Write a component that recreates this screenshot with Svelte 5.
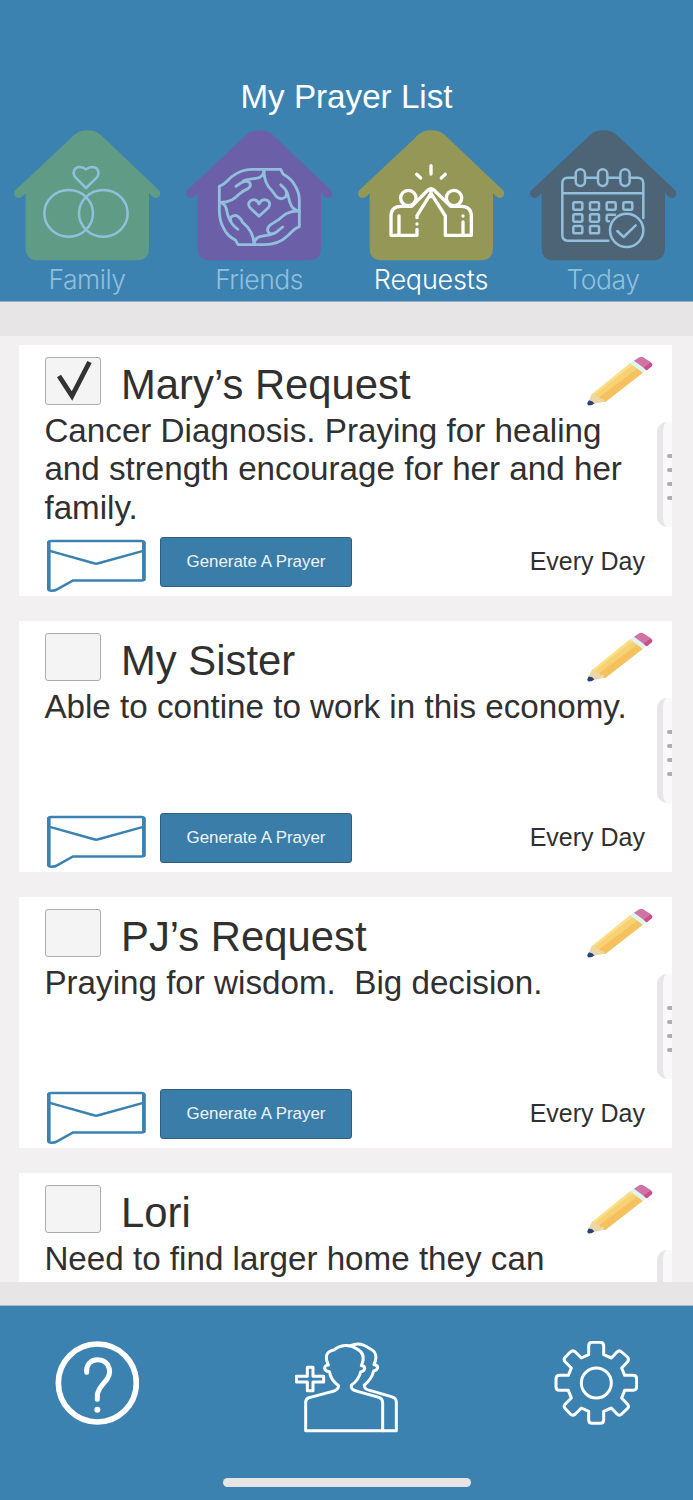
<script>
    let tabs = [
        { id: "family", label: "Family" },
        { id: "friends", label: "Friends" },
        { id: "requests", label: "Requests" },
        { id: "today", label: "Today" },
    ];
    let activeTab = "requests";

    let requests = [
        { name: "Mary’s Request", text: "Cancer Diagnosis. Praying for healing and strength encourage for her and her family.", when: "Every Day", done: true },
        { name: "My Sister", text: "Able to contine to work in this economy.", when: "Every Day", done: false },
        { name: "PJ’s Request", text: "Praying for wisdom.  Big decision.", when: "Every Day", done: false },
        { name: "Lori", text: "Need to find larger home they can", when: "", done: false },
    ];

    function toggle(index) {
        requests[index].done = !requests[index].done;
    }
</script>

<div class="app">
    <header>
        <h1>My Prayer List</h1>
        <nav>
            {#each tabs as tab}
                <button class="tab {tab.id}" class:active={tab.id === activeTab} on:click={() => (activeTab = tab.id)}>
                    <svg class="house" viewBox="3 30 516 393">
                        <path class="roof" d="M46 211 L213 54 C228 38 240 31 262 31 C284 31 296 38 312 54 L477 211 Q485 221 477 230 Q467 238 456 229 L447 220 V384 Q447 421 410 421 H114 Q77 421 77 384 V220 L68 229 Q57 239 46 230 Q38 221 46 211 Z" />
                        {#if tab.id === "family"}
                            <g class="lines">
                                <ellipse cx="206" cy="280" rx="73" ry="70" />
                                <ellipse cx="310" cy="280" rx="73" ry="70" />
                                <path d="M258 204 L227 173 C213 155 226 141 239 141 Q250 141 258 148 Q266 141 277 141 C290 141 303 155 290 173 Z" />
                            </g>
                        {:else if tab.id === "friends"}
                            <g class="lines thick" transform="translate(9 0)">
                                <path d="M133 247 V199 C152 193 155 183 169 171 Q198 148 231 148 H317 L324 162 C344 174 352 181 362 200 Q373 219 373 240 V320 C354 327 350 337 337 348 Q311 374 267 374 H189 L182 361 C165 351 155 344 145 323 Q133 302 133 270 Z" />
                                <path d="M133 247 C166 247 179 236 193 222 Q207 211 219 206 Q231 197 223 187 Q216 180 199 188 L183 199 M205 183 C225 171 264 185 267 151" />
                                <path d="M267 151 C267 178 274 197 290 211 Q299 222 304 230 Q318 242 331 231 Q339 221 330 207 L317 194 M334 213 C345 229 338 267 372 273" />
                                <path d="M372 273 C340 272 326 285 311 299 L287 314 Q273 325 280 337 Q291 347 306 335 L323 321 M301 338 C277 354 241 338 237 372" />
                                <path d="M133 247 C158 251 153 274 160 290 Q168 314 189 328 M168 303 Q161 288 182 286 Q195 290 203 307 Q236 334 237 372" />
                                <path d="M252 289 L225 263 C214 249 228 239 236 239 Q248 240 252 252 Q257 240 268 239 C279 239 290 249 280 263 Z" />
                            </g>
                        {:else if tab.id === "requests"}
                            <g class="lines bold" transform="translate(3 0)">
                                <path d="M258 137 V162 M215 163 L227 174 M301 163 L289 174" />
                                <ellipse cx="190" cy="234" rx="23" ry="23" />
                                <ellipse cx="327" cy="234" rx="23" ry="23" />
                                <path d="M216 328 V346 H138 V289 Q138 259 168 259 H200 L249 210 Q258 202 267 210 L317 259 H349 Q379 259 379 289 V346 H301 V288 L258 220 L216 287 V293 M216 312 v.1 M258 214 V230 M162 288 V342 M354 306 V342 M354 288 v.1" />
                            </g>
                        {:else}
                            <g class="lines" transform="translate(12 0)">
                                <path d="M265 362 H143 Q127 362 127 346 V189 Q127 173 143 173 H167 M196 173 H233 M264 173 H300 M329 173 H353 Q370 173 370 190 V294 M127 220 H370" />
                                <rect x="167" y="148" width="28" height="50" rx="14" />
                                <rect x="234" y="148" width="28" height="50" rx="14" />
                                <rect x="301" y="148" width="28" height="50" rx="14" />
                                {#each [[160, 247], [210, 247], [260, 247], [310, 247], [160, 283], [210, 283], [160, 318], [210, 318]] as [x, y]}
                                    <rect {x} {y} width="27" height="22" rx="4" />
                                {/each}
                                <path d="M285 284 H263 Q260 284 260 288 V299 Q260 304 267 304" />
                                <circle cx="320" cy="331" r="50" />
                                <path d="M292 333 L311 351 L347 316" />
                            </g>
                        {/if}
                    </svg>
                    <span>{tab.label}</span>
                </button>
            {/each}
        </nav>
    </header>

    <main>
        {#each requests as request, i}
            <section class="card">
                <div class="card-head">
                    <button class="check" aria-label="Answered" on:click={() => toggle(i)}>
                        {#if request.done}
                            <svg viewBox="0 0 56 48"><path d="M14 19 L27 39 L44.5 5" /></svg>
                        {/if}
                    </button>
                    <h2>{request.name}</h2>
                    <svg class="pencil" viewBox="50 32 197 149">
                        <path fill="#f9df86" d="M65 145 L179 53 L191 61 L76 153 Z" />
                        <path fill="#f7d173" d="M72 148 L187 58 L204 71 L88 162 Z" />
                        <path fill="#f5c15f" d="M82 158 L201 69 L217 82 L105 169 L92 169 Z" />
                        <path fill="#ead7a4" d="M65 144 Q76 143 77 153 Q87 151 90 160 Q99 158 105 168 L68 175 L55 166 Z" />
                        <path fill="#27427d" d="M55 165 Q65 164 72 173 Q67 180 55 180 Q47 176 55 165 Z" />
                        <path fill="#ddf5f1" d="M179 54 L190 46 L228 74 L217 82 Z" />
                        <path fill="#cf74a4" d="M190 46 L205 36 Q211 32 219 36 L240 50 Q247 56 243 62 L228 74 Z" />
                        <path fill="#ce4d8b" d="M219 67 L236 54 Q242 51 245 57 Q246 61 241 65 L228 75 Z" />
                    </svg>
                </div>
                <p>{request.text}</p>
                {#if request.when}
                    <div class="card-foot">
                        <svg class="mail" viewBox="36 28 302 160">
                            <path class="side" d="M43 39 V179 M330 39 V150" />
                            <path d="M42 38 Q42 34 50 34 H322 Q331 34 331 39 V148 Q331 153 323 153 H116 L68 180 Q62 184 51 184 Q42 184 42 178 Z M46 64 L179 101 Q186 104 193 101 L328 64" />
                        </svg>
                        <button class="generate">Generate A Prayer</button>
                        <span class="when">{request.when}</span>
                    </div>
                {/if}
                <div class="handle"><i></i><i></i><i></i><i></i></div>
            </section>
        {/each}
    </main>

    <footer>
        <div class="actions">
            <svg width="84" height="84" viewBox="46 48 252 252">
                <circle class="ring" cx="173" cy="174" r="117" />
                <path class="mark" d="M141 142 C139 120 152 104 174 104 Q194 104 204 119 Q216 140 203 161 C192 178 173 190 173 213 V223" />
                <circle class="dot" cx="173" cy="254" r="9" />
            </svg>
            <svg width="104" height="92" viewBox="30 33 312 276">
                <path d="M67 112 H84 V139 H116 V156 H84 V182 H67 V156 H34 V139 H67 Z" />
                <path d="M62 302 V216 Q63 205 76 202 L140 185 Q161 180 161 167 Q139 153 133 125 Q121 124 119 115 Q118 106 130 105 C117 77 126 64 147 60 C165 43 196 42 214 56 C237 67 239 85 229 107 Q239 107 239 115 Q238 124 227 126 Q221 150 199 166 Q196 180 217 184 L282 202 Q293 206 293 218 V302 Z" />
                <path d="M197 47 C216 38 237 43 253 55 C275 64 277 83 267 104 Q278 104 278 113 Q276 121 266 123 Q260 148 238 165 Q236 178 257 182 L319 200 Q334 204 334 216 V302 H293" />
            </svg>
            <svg width="84" height="84" viewBox="43 214 252 252">
                <circle cx="170" cy="340" r="45" />
                <path d="M147 255 V229 Q147 218 158 218 H181 Q192 218 192 229 V255 L215 265 L232 247 Q239 240 246 247 L263 262 Q270 269 263 277 L246 295 L255 317 H280 Q291 317 291 328 V351 Q291 362 280 362 H255 L246 385 L263 403 Q270 410 263 417 L246 433 Q239 440 232 433 L215 415 L192 425 V450 Q192 461 181 461 H158 Q147 461 147 450 V425 L125 415 L107 433 Q99 440 92 433 L77 417 Q70 410 77 403 L95 385 L86 362 H60 Q49 362 49 351 V328 Q49 317 60 317 H86 L95 295 L77 277 Q70 269 77 262 L92 247 Q99 240 107 247 L125 265 Z" />
            </svg>
        </div>
        <div class="home-bar"></div>
    </footer>
</div>

<style>
    :global(body) {
        background-color: #f2f0f1;
    }

    .app {
        display: flex;
        flex-direction: column;
        height: 1500px;
        overflow: hidden;
        font-family: "Liberation Sans", Arial, sans-serif;
        color: #303030;
    }

    header {
        box-sizing: border-box;
        height: 302px;
        padding-top: 77px;
        background-color: #3b82b1;
        border-bottom: 1px solid #8eb0c9;
        flex-shrink: 0;
    }

    h1 {
        margin: 0 0 13px;
        font-size: 33.2px;
        line-height: 40px;
        font-weight: normal;
        text-align: center;
        color: #fff;
    }

    nav {
        display: flex;
        margin-left: 1px;
    }

    button {
        font-family: inherit;
        padding: 0;
        border: 0;
        background: none;
    }

    .tab {
        width: 172px;
        flex-shrink: 0;
        color: #92bfdc;
    }

    .tab span {
        display: block;
        font-family: Inter, "Liberation Sans", sans-serif;
        font-weight: 300;
        font-size: 26.5px;
        line-height: 37px;
        letter-spacing: -0.5px;
    }

    .tab.active {
        color: #fff;
    }

    .tab.active span {
        font-size: 27px;
        letter-spacing: -0.2px;
    }

    .house {
        display: block;
        width: 172px;
        height: 131px;
    }

    .family .roof {
        fill: #609b85;
    }

    .friends .roof {
        fill: #6b5fa7;
    }

    .requests .roof {
        fill: #949756;
    }

    .today .roof {
        fill: #4c6475;
    }

    .lines {
        fill: none;
        stroke: currentColor;
        stroke-width: 7.5;
        stroke-linecap: round;
        stroke-linejoin: round;
    }

    .thick {
        stroke-width: 8.5;
    }

    .bold {
        stroke-width: 10;
    }

    main {
        box-sizing: border-box;
        height: 1003px;
        padding: 9px 21px 0 19px;
        border-top: 34px solid #e7e5e6;
        border-bottom: 23px solid #e7e5e6;
        overflow: hidden;
        display: flex;
        flex-direction: column;
        gap: 25.3px;
        flex-shrink: 0;
    }

    .card {
        position: relative;
        box-sizing: border-box;
        height: 250.8px;
        padding: 12px 0 0 26px;
        background-color: #fff;
        flex-shrink: 0;
        display: flex;
        flex-direction: column;
    }

    .card-head {
        display: flex;
        height: 55px;
    }

    .check {
        box-sizing: border-box;
        width: 56px;
        height: 48px;
        border: 1px solid #ababab;
        border-radius: 3px;
        background-color: #f4f4f4;
    }

    .check svg {
        display: block;
        width: 56px;
        height: 48px;
        margin: -1px;
        fill: none;
        stroke: #333;
        stroke-width: 4.8;
    }

    h2 {
        margin: 4px 0 0 20px;
        font-size: 41.8px;
        line-height: 48px;
        font-weight: normal;
        flex: 1;
    }

    .pencil {
        width: 66px;
        height: 50px;
        margin: -1px 19.5px 0 0;
    }

    p {
        margin: 0 0 0 -0.6px;
        width: 600px;
        height: 126px;
        font-size: 33.2px;
        line-height: 38.3px;
        white-space: pre-wrap;
    }

    .card-foot {
        display: flex;
    }

    .mail {
        width: 101px;
        height: 53px;
        margin: 1px 0 0 1px;
        fill: none;
        stroke: #3b82b1;
        stroke-width: 7.5;
    }

    .mail .side {
        stroke-width: 11;
        stroke-linecap: round;
    }

    .generate {
        box-sizing: border-box;
        width: 192px;
        height: 50px;
        margin: -0.8px 0 0 13px;
        border: 1px solid #2e5f80;
        border-radius: 3px;
        background-color: #3b7da9;
        color: #eef4f8;
        font-size: 16.9px;
    }

    .when {
        margin: 7px 27px 0 auto;
        font-size: 25px;
        line-height: 32px;
    }

    .handle {
        position: absolute;
        right: 0;
        top: 77px;
        box-sizing: border-box;
        width: 15px;
        height: 105px;
        border-left: 6px solid #e7e5e7;
        border-radius: 10px 0 0 10px;
        background-color: #f9f9f9;
        padding: 32px 0 0 4px;
    }

    .handle i {
        display: block;
        height: 4px;
        margin-bottom: 10px;
        border-radius: 2px 0 0 2px;
        background-color: #b0adb2;
    }

    footer {
        box-sizing: border-box;
        height: 195px;
        flex-shrink: 0;
        display: flex;
        flex-direction: column;
        align-items: center;
        justify-content: space-between;
        padding: 35px 55px 13px;
        background-color: #3b82b1;
        border-top: 1px solid #a9bac7;
    }

    .actions {
        display: flex;
        justify-content: space-between;
        width: 100%;
        fill: none;
        stroke: #fff;
        stroke-width: 9;
        stroke-linejoin: round;
        stroke-linecap: round;
    }

    .ring {
        stroke-width: 17;
    }

    .mark {
        stroke-width: 15;
    }

    .dot {
        fill: #fff;
        stroke: none;
    }

    .home-bar {
        width: 248px;
        height: 9px;
        border-radius: 5px;
        background-color: #e6e4e5;
    }
</style>
